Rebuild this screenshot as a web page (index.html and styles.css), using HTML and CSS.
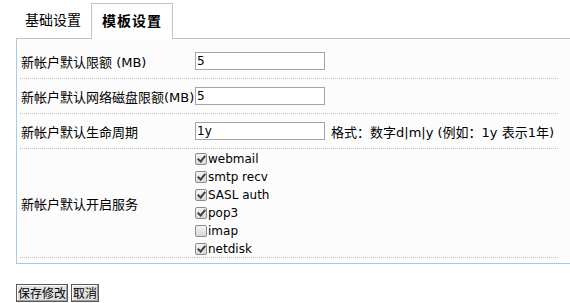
FILE: index.html
```html
<!DOCTYPE html>
<html lang="zh-CN">
<head>
  <meta charset="UTF-8" />
  <title>模板设置</title>
  <link rel="stylesheet" href="styles.css">
</head>
<body>
  <div class="page">
    <ul class="tabs">
      <li class="tab">基础设置</li>
      <li class="tab active">模板设置</li>
    </ul>

    <div class="panel">
      <table class="settings">
        <tr>
          <td class="label">新帐户默认限额 (MB)</td>
          <td><input type="text" class="field" value="5" /></td>
        </tr>
        <tr>
          <td class="label">新帐户默认网络磁盘限额(MB)</td>
          <td><input type="text" class="field" value="5" /></td>
        </tr>
        <tr>
          <td class="label">新帐户默认生命周期</td>
          <td><input type="text" class="field" value="1y" /><span class="note">格式：数字d|m|y (例如：1y 表示1年)</span></td>
        </tr>
        <tr>
          <td class="label">新帐户默认开启服务</td>
          <td class="services">
            <label class="svc"><input type="checkbox" checked />webmail</label>
            <label class="svc"><input type="checkbox" checked />smtp recv</label>
            <label class="svc"><input type="checkbox" checked />SASL auth</label>
            <label class="svc"><input type="checkbox" checked />pop3</label>
            <label class="svc"><input type="checkbox" />imap</label>
            <label class="svc"><input type="checkbox" checked />netdisk</label>
          </td>
        </tr>
      </table>
    </div>

    <div class="actions">
      <button class="btn">保存修改</button>
      <button class="btn">取消</button>
    </div>
  </div>
</body>
</html>
```

FILE: styles.css
```css
body {
  margin: 0;
  font-family: "DejaVu Sans", "Noto Sans CJK SC", sans-serif;
  font-size: 12px;
  color: #000;
  background: #fff;
}
.page {
  padding-left: 16px;
}

/* tabs */
.tabs {
  display: flex;
  margin: 0;
  padding: 3px 0 0 0;
  list-style: none;
  border-bottom: 1px solid #c4c4c4;
}
.tab {
  height: 35px;
  line-height: 32px;
  padding: 0 10px 0 9px;
  font-family: "Noto Sans CJK SC", sans-serif;
  font-size: 14px;
}
.tab.active {
  margin-bottom: -1px;
  padding: 0 10px;
  border: 1px solid #c4c4c4;
  border-bottom: none;
  background: #fff;
  font-weight: bold;
  letter-spacing: 1px;
}

/* panel */
.panel {
  padding: 5px 12px 5px 3px;
  border-left: 1px solid #a9cbe6;
  border-bottom: 1px solid #a9cbe6;
  background: #fcfcfc;
}
.settings {
  width: 100%;
  border-collapse: collapse;
}
.settings td {
  height: 34px;
  padding: 0;
  border-bottom: 1px dotted #bdbdbd;
  font-size: 13px;
  vertical-align: middle;
}
.settings td.label {
  width: 174px;
  padding-left: 1px;
  white-space: nowrap;
}
.field {
  box-sizing: border-box;
  width: 130px;
  height: 18px;
  padding: 0 1px;
  border: 1px solid #a5a5a5;
  background: #fff;
  font-family: "DejaVu Sans", sans-serif;
  font-size: 12px;
  vertical-align: middle;
}
.note {
  margin-left: 6px;
  vertical-align: middle;
}

/* services */
.settings td.services {
  padding: 1px 0 0 0;
}
.svc {
  display: flex;
  align-items: center;
  height: 18px;
  font-size: 12px;
}
.svc:last-child {
  height: 17px;
}
.svc input {
  appearance: none;
  -webkit-appearance: none;
  position: relative;
  box-sizing: border-box;
  width: 12px;
  height: 12px;
  margin: 0 1px 0 0;
  border: 1px solid #8c8c8c;
  border-radius: 2px;
  background: linear-gradient(#f4f4f4, #d8d8d8);
}
.svc input:checked::after {
  content: "";
  position: absolute;
  left: 3px;
  top: 0;
  width: 3px;
  height: 6px;
  border: solid #404040;
  border-width: 0 2px 2px 0;
  transform: rotate(40deg);
}

/* buttons */
.actions {
  display: flex;
  gap: 3px;
  margin-top: 20px;
}
.btn {
  height: 18px;
  padding: 0 1px;
  border: 1px solid #5a5a5a;
  border-radius: 0;
  background: #e2e2e2;
  box-shadow: inset -1px -1px #a0a0a0, inset 1px 1px #fff;
  font-family: "Noto Sans CJK SC", sans-serif;
  font-size: 12px;
  line-height: 14px;
  color: #000;
}
```
